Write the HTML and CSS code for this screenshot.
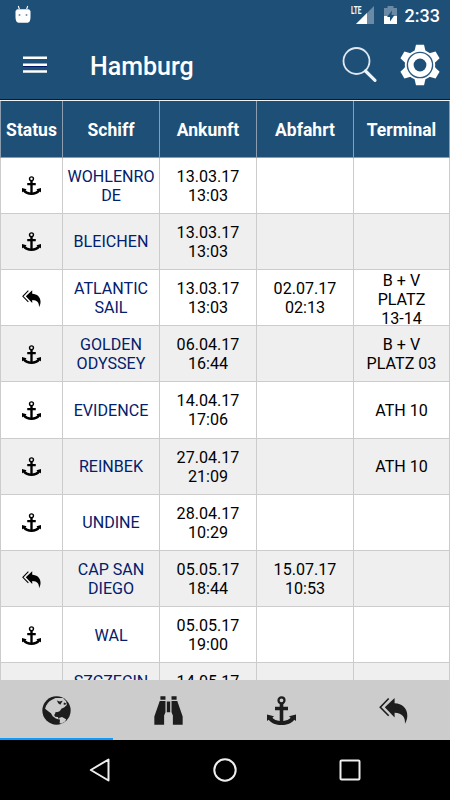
FILE: index.html
```
<!DOCTYPE html>
<html lang="de">
<head>
    <meta charset="UTF-8">
    <meta name="viewport" content="width=device-width, initial-scale=1.0">
    <title>Hamburg</title>
    <link rel="stylesheet" href="styles.css">
</head>
<body>

<!-- Shared icons -->
<svg class="icon-defs">
    <symbol id="anchor" viewBox="0 0 29 29">
        <circle cx="14.5" cy="4.300" r="3" fill="none" stroke="currentColor" stroke-width="2.200"/>
        <path fill="currentColor" d="M12.700 7h3.600v3.700h4.700v3.600h-4.700V25c3-.3 5.700-1.400 7.300-3.200L22 20.200l7-1.800v6.700l-1.700-1.400c-2.600 3.400-7.200 5.300-12.800 5.300S4.300 27.100 1.700 23.700L0 25.100v-6.700l7 1.800-1.600 1.600C7 23.600 9.700 24.700 12.700 25V14.300H8v-3.600h4.700z"/>
    </symbol>
    <symbol id="reply" viewBox="0 0 29 29">
        <path fill="none" stroke="currentColor" stroke-width="1.600" d="M9.700 2.500L1.300 11.200l8.400 8.600"/>
        <path fill="currentColor" d="M15.600 2v5.200c7.500.2 12.700 5 12.700 12.200 0 3-.8 5.600-2.300 8.300.3-6.300-2.400-10.700-10.400-10.900v4.700L5.800 11.200z"/>
    </symbol>
</svg>

<div class="screen">
    <!-- Status bar -->
    <div class="status-bar">
        <svg class="android" width="16" height="19" viewBox="0 0 16 19">
            <path d="M3.300 1l1.300 4M12.700 1l-1.300 4" stroke="#fff" stroke-width="1.100"/>
            <path d="M1 5.500Q1 4 3 4h10q2 0 2 1.500z" fill="#c6d2dd"/>
            <path d="M.5 6.500Q.5 5 2 5h12q1.500 0 1.500 1.500V12q0 5.700-3 5.700h-9q-3 0-3-5.700z" fill="#fff"/>
            <circle cx="4.500" cy="10" r="1" fill="#7691ab"/>
            <circle cx="11.500" cy="10" r="1" fill="#7691ab"/>
        </svg>
        <div class="status-right">
            <span class="lte">LTE</span>
            <svg class="signal" width="18" height="18" viewBox="0 0 18 18">
                <path d="M18 0v18H0z" fill="#6b8aa6"/>
                <path d="M11 7v11H0z" fill="#fff"/>
            </svg>
            <svg class="battery" width="13" height="18" viewBox="0 0 13 18">
                <path d="M0 2h3.500V0h6v2H13v8H0z" fill="#6b8aa6"/>
                <path d="M0 10h13v8H0z" fill="#fff"/>
                <path d="M8 4.500L3 11h3v4.500L10.500 9H7.500z" fill="#1d4f77"/>
            </svg>
            <span class="clock">2:33</span>
        </div>
    </div>

    <!-- Toolbar -->
    <div class="toolbar">
        <svg class="menu" width="24" height="18" viewBox="0 0 24 18">
            <path d="M0 1.800h24M0 8.800h24M0 15.600h24" stroke="#fff" stroke-width="2.500"/>
            <path d="M0 10.500h24" stroke="#00176a"/>
        </svg>
        <h1>Hamburg</h1>
        <svg class="search" width="36" height="38" viewBox="0 0 36 38">
            <circle cx="14.500" cy="15" r="13" fill="none" stroke="#dfe8f0" stroke-width="1.800"/>
            <path d="M23.500 25L33 34.300" stroke="#eef3f7" stroke-width="3.200" stroke-linecap="round"/>
        </svg>
        <svg class="settings" width="42" height="42" viewBox="-21 -21 42 42">
            <g fill="#fff">
                <circle r="15.200"/>
                <path id="teeth" d="M-5.500-14L-4-20.300H4L5.500-14V14L4 20.300H-4L-5.500 14z"/>
                <use href="#teeth" transform="rotate(60)"/>
                <use href="#teeth" transform="rotate(120)"/>
            </g>
            <circle r="12.600" fill="none" stroke="#2c5a80" stroke-width="1.400"/>
            <circle r="6.400" fill="#1d4f77"/>
        </svg>
    </div>

    <!-- Ship list -->
    <div class="ships">
        <div class="row head">
            <div>Status</div><div>Schiff</div><div>Ankunft</div><div>Abfahrt</div><div>Terminal</div>
        </div>
        <div class="row">
            <div><svg class="state"><use href="#anchor"/></svg></div>
            <div class="ship">WOHLENRO<br>DE</div>
            <div>13.03.17<br>13:03</div><div></div><div></div>
        </div>
        <div class="row">
            <div><svg class="state"><use href="#anchor"/></svg></div>
            <div class="ship">BLEICHEN</div>
            <div>13.03.17<br>13:03</div><div></div><div></div>
        </div>
        <div class="row">
            <div><svg class="state"><use href="#reply"/></svg></div>
            <div class="ship">ATLANTIC<br>SAIL</div>
            <div>13.03.17<br>13:03</div><div>02.07.17<br>02:13</div><div class="tall">B + V<br>PLATZ<br>13-14</div>
        </div>
        <div class="row">
            <div><svg class="state"><use href="#anchor"/></svg></div>
            <div class="ship">GOLDEN<br>ODYSSEY</div>
            <div>06.04.17<br>16:44</div><div></div><div>B + V<br>PLATZ 03</div>
        </div>
        <div class="row">
            <div><svg class="state"><use href="#anchor"/></svg></div>
            <div class="ship">EVIDENCE</div>
            <div>14.04.17<br>17:06</div><div></div><div>ATH 10</div>
        </div>
        <div class="row">
            <div><svg class="state"><use href="#anchor"/></svg></div>
            <div class="ship">REINBEK</div>
            <div>27.04.17<br>21:09</div><div></div><div>ATH 10</div>
        </div>
        <div class="row">
            <div><svg class="state"><use href="#anchor"/></svg></div>
            <div class="ship">UNDINE</div>
            <div>28.04.17<br>10:29</div><div></div><div></div>
        </div>
        <div class="row">
            <div><svg class="state"><use href="#reply"/></svg></div>
            <div class="ship">CAP SAN<br>DIEGO</div>
            <div>05.05.17<br>18:44</div><div>15.07.17<br>10:53</div><div></div>
        </div>
        <div class="row">
            <div><svg class="state"><use href="#anchor"/></svg></div>
            <div class="ship">WAL</div>
            <div>05.05.17<br>19:00</div><div></div><div></div>
        </div>
        <div class="row last">
            <div></div>
            <div class="ship">SZCZECIN</div>
            <div>14.05.17</div><div></div><div></div>
        </div>
    </div>

    <!-- Tabs -->
    <div class="tabs">
        <div class="tab active">
            <svg viewBox="0 0 84 84">
                <circle cx="42" cy="42" r="41" fill="#1d1d1d"/>
                <path fill="#ccc" d="M9 37Q13 19 29 11l10-5h22l9 9 2 11-8 7-7 3-6 8-10 4-6 7 3 5 8 1 3 7-9-3-9-6-5-9-8-6z"/>
                <path fill="#ccc" d="M49 64l9-3 12 6-3 7-10 6-6-1 1-8z"/>
                <path fill="#1d1d1d" d="M43 13l8 3 9-2-4 6-3 5-6-4zM64 19l6 3-3 4-5-2zM38 48l5-2 1 7-4 2z"/>
            </svg>
        </div>
        <div class="tab">
            <svg viewBox="0 0 86 86">
                <path fill="#1d1d1d" d="M19 1h15v10H19zM52 1h15v10H52zM17 15h17v33l-4 10v27H1V61zM52 15h17l16 46v24H56V58l-4-10zM38 16h10v32H38z"/>
            </svg>
        </div>
        <div class="tab"><svg><use href="#anchor"/></svg></div>
        <div class="tab"><svg><use href="#reply"/></svg></div>
    </div>

    <!-- Navigation bar -->
    <div class="nav-bar">
        <svg width="24" height="28" viewBox="0 0 24 28"><path d="M20.500 3.500v21L2.800 14z"/></svg>
        <svg width="24" height="28" viewBox="0 0 24 28"><circle cx="12" cy="14" r="10.700"/></svg>
        <svg width="24" height="28" viewBox="0 0 24 28"><rect x="2.500" y="4.500" width="19" height="19" rx="1"/></svg>
    </div>
</div>

</body>
</html>
```
FILE: styles.css
```
* {
    box-sizing: border-box;
}

body {
    margin: 0;
    font-family: Roboto, "Liberation Sans", sans-serif;
}

svg {
    display: block;
    flex: none;
}

.icon-defs {
    display: none;
}

.screen {
    width: 450px;
    height: 800px;
    display: flex;
    flex-direction: column;
    overflow: hidden;
    background-color: #000;
}

.status-bar {
    height: 30px;
    flex: none;
    display: flex;
    justify-content: space-between;
    background-color: #1d4f77;
    color: white;
}

.android {
    margin: 5px 0 0 15px;
}

.status-right {
    display: flex;
    margin-right: 10px;
}

.lte {
    font-size: 10px;
    line-height: 10px;
    font-weight: 700;
    width: 5px;
    margin-top: 6px;
    transform: scaleX(0.65);
    transform-origin: left;
}

.signal {
    margin-top: 6px;
}

.battery {
    margin: 6px 0 0 10px;
}

.clock {
    font-size: 18px;
    line-height: 32px;
    margin-left: 8px;
    font-weight: 500;
}

.toolbar {
    height: 70px;
    flex: none;
    display: flex;
    align-items: flex-start;
    background-color: #1d4f77;
    border-bottom: 1px solid #001461;
    color: white;
}

.menu {
    margin: 26px 0 0 23px;
}

.toolbar h1 {
    margin: 21px auto 0 43px;
    font-size: 25px;
    line-height: 32px;
    font-weight: 500;
}

.search {
    margin: 16px 0 0;
}

.settings {
    margin: 14px 9px 0 21px;
}

.ships {
    flex: 1;
    min-height: 0;
    overflow: hidden;
    border-top: 1px solid #f0f2f4;
    background-color: white;
}

.row {
    display: grid;
    grid-template-columns: 63px 97px 97px 97px 96px;
    height: 56.2px;
    font-size: 16.1px;
    line-height: 19px;
    background-color: white;
}

.row:nth-child(odd) {
    background-color: #efefef;
}

.row > div {
    display: flex;
    align-items: center;
    justify-content: center;
    text-align: center;
    overflow: hidden;
    padding-top: 1px;
    border-right: 1px solid #ccc;
    border-bottom: 1px solid #ccc;
}

.row > div:first-child {
    border-left: 1px solid #ccc;
}

.row.head {
    height: 56.6px;
    background-color: #1d4f77;
    color: white;
    font-size: 17.5px;
    font-weight: 700;
}

.row.head > div {
    padding-top: 4px;
    border-color: #8b9dae;
}

.row .ship {
    color: #03206b;
}

.row .tall {
    align-items: flex-start;
    padding-top: 2px;
    line-height: 18.9px;
}

.row.last > div {
    align-items: flex-start;
    padding-top: 9px;
}

.state {
    width: 19px;
    height: 19px;
}

.tabs {
    height: 60px;
    flex: none;
    display: grid;
    grid-template-columns: repeat(4, 1fr);
    background-color: #ccc;
    color: #1d1d1d;
}

.tab {
    display: flex;
    align-items: center;
    justify-content: center;
    padding-top: 2px;
    border-bottom: 2px solid transparent;
}

.tab.active {
    border-color: #0d9aff;
}

.tab svg {
    width: 29px;
    height: 29px;
}

.nav-bar {
    height: 60px;
    flex: none;
    display: flex;
    align-items: center;
    justify-content: center;
    gap: 101px;
}

.nav-bar svg {
    fill: none;
    stroke: #eee;
    stroke-width: 2;
    stroke-linejoin: round;
}
```
